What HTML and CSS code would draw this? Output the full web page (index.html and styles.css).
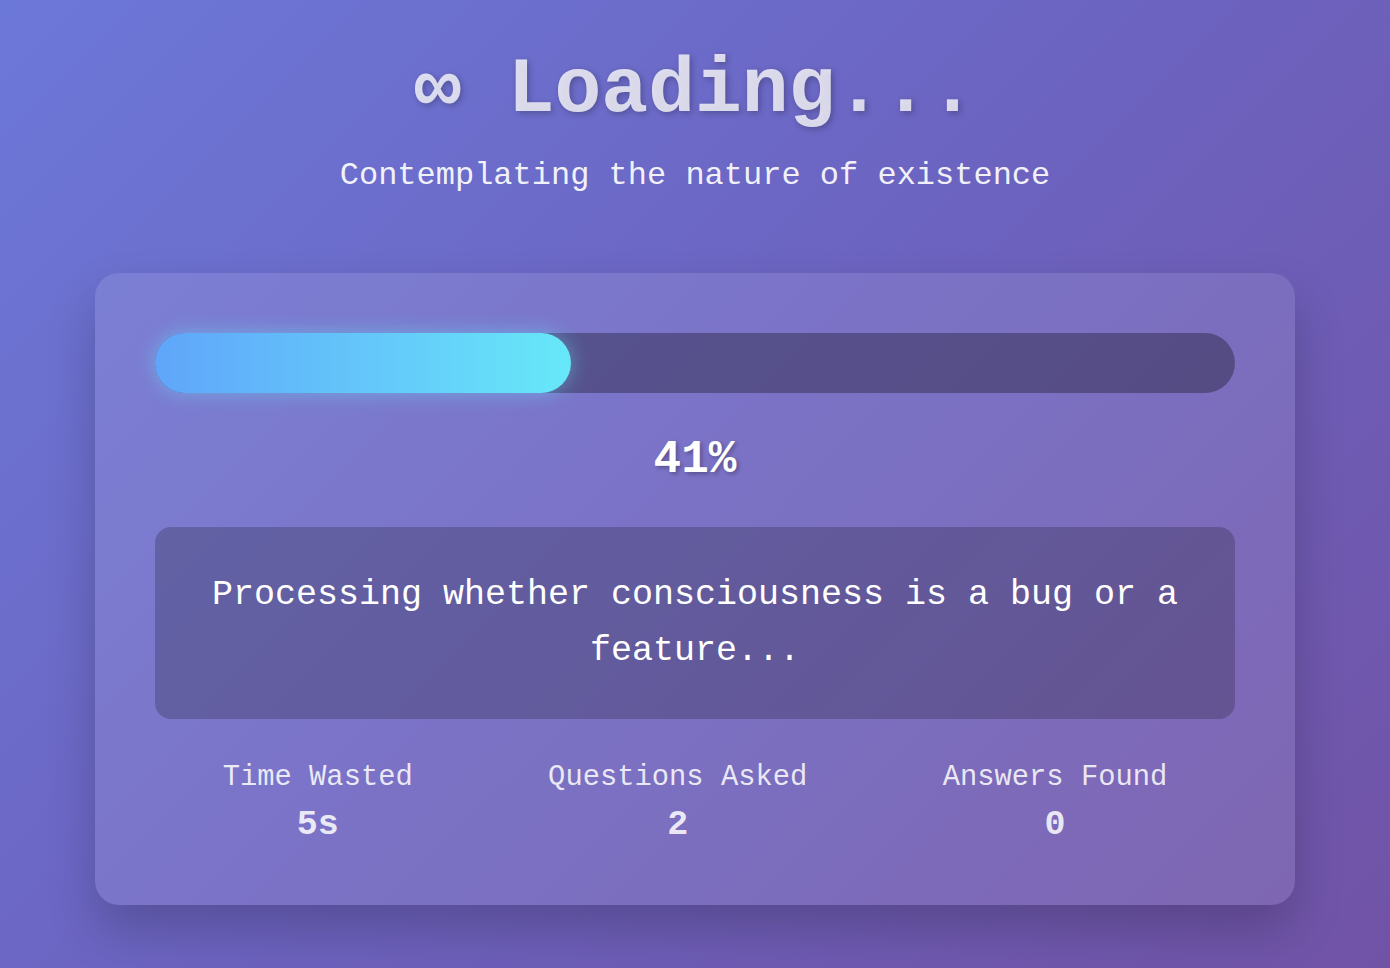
FILE: index.html
```html
<!DOCTYPE html>
<html lang="en">
<head>
    <meta charset="UTF-8">
    <meta name="viewport" content="width=device-width, initial-scale=1.0">
    <title>Infinite Loading</title>
    <link rel="stylesheet" href="styles.css">
</head>
<body>
    <header class="header">
        <h1 class="title">∞ Loading...</h1>
        <p class="subtitle">Contemplating the nature of existence</p>
    </header>

    <main class="card">
        <div class="progress-track">
            <div class="progress-fill" style="width: 38.5%"></div>
        </div>

        <div class="percent">41%</div>

        <div class="message">
            Processing whether consciousness is a bug or a feature...
        </div>

        <div class="stats">
            <div class="stat">
                <div class="stat-label">Time Wasted</div>
                <div class="stat-value">5s</div>
            </div>
            <div class="stat">
                <div class="stat-label">Questions Asked</div>
                <div class="stat-value">2</div>
            </div>
            <div class="stat">
                <div class="stat-label">Answers Found</div>
                <div class="stat-value">0</div>
            </div>
        </div>
    </main>
</body>
</html>
```

FILE: styles.css
```css
* {
    margin: 0;
    padding: 0;
    box-sizing: border-box;
}

body {
    min-height: 100vh;
    font-family: 'Liberation Mono', 'Courier New', monospace;
    background: linear-gradient(135deg, #6c78d8 0%, #6c63c0 50%, #7153a6 100%);
    color: #ffffff;
    padding-top: 42px;
}

/* Header */
.header {
    text-align: center;
}

.title {
    font-size: 78px;
    line-height: 96px;
    font-weight: 700;
    color: rgba(255, 255, 255, 0.78);
    text-shadow: 2px 2px 6px rgba(0, 0, 0, 0.25);
}

.subtitle {
    margin-top: 17px;
    font-size: 32px;
    line-height: 42px;
    color: rgba(255, 255, 255, 0.92);
}

/* Card */
.card {
    width: 1200px;
    margin: 76px auto 0;
    padding: 60px;
    background: rgba(255, 255, 255, 0.1);
    border-radius: 24px;
    box-shadow: 0 25px 50px rgba(0, 0, 0, 0.2);
}

.progress-track {
    height: 60px;
    border-radius: 30px;
    background: rgba(0, 0, 0, 0.3);
}

.progress-fill {
    height: 100%;
    border-radius: 30px;
    background: linear-gradient(90deg, #60a5fa, #67e8f9);
    box-shadow: 0 0 20px rgba(103, 232, 249, 0.45);
}

.percent {
    margin-top: 40px;
    text-align: center;
    font-size: 46px;
    line-height: 54px;
    font-weight: 700;
    text-shadow: 2px 2px 4px rgba(0, 0, 0, 0.3);
}

.message {
    margin-top: 40px;
    padding: 40px;
    background: rgba(0, 0, 0, 0.2);
    border-radius: 16px;
    text-align: center;
    font-size: 35px;
    line-height: 56px;
}

.stats {
    margin-top: 42px;
    display: flex;
    justify-content: space-around;
    text-align: center;
}

.stat-label {
    font-size: 28.8px;
    line-height: 34px;
    color: rgba(255, 255, 255, 0.85);
}

.stat-value {
    margin-top: 10px;
    font-size: 35px;
    line-height: 40px;
    font-weight: 700;
    color: rgba(255, 255, 255, 0.85);
}
```
